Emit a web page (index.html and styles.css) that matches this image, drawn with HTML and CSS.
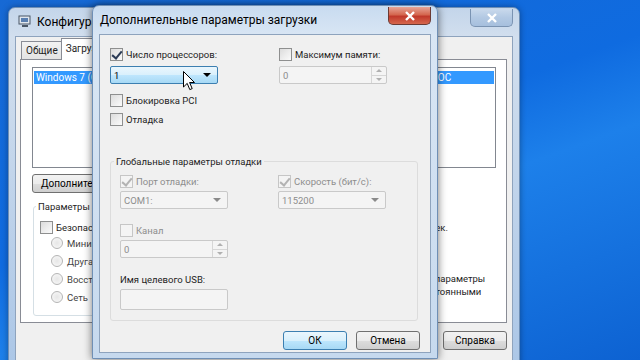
FILE: index.html
```html
<!DOCTYPE html>
<html lang="ru">
<head>
  <meta charset="UTF-8" />
  <meta name="viewport" content="width=device-width, initial-scale=1.0"/>
  <title>Дополнительные параметры загрузки</title>
  <link rel="stylesheet" href="styles.css">
</head>
<body>
  <div class="desktop">

    <!-- окно на заднем плане -->
    <div class="window main-win">
      <div class="titlebar">
        <svg class="app-icon" width="14" height="14" viewBox="0 0 14 14">
          <rect x="1" y="1" width="11" height="8" fill="#dfe6ee" stroke="#4a5766"/>
          <rect x="3" y="3" width="7" height="4" fill="#5a7fb0"/>
          <rect x="4" y="10" width="6" height="2" fill="#4a5766"/>
        </svg>
        <span class="title">Конфигурация системы</span>
        <div class="close-btn inactive">
          <svg width="12" height="10" viewBox="0 0 12 10"><path d="M2 1 L10 9 M10 1 L2 9" stroke="#fff" stroke-width="2.4"/></svg>
        </div>
      </div>
      <div class="client">
        <div class="tabs">
          <div class="tab">Общие</div>
          <div class="tab active">Загрузка</div>
          <div class="tab">Службы</div>
          <div class="tab">Автозагрузка</div>
          <div class="tab">Сервис</div>
        </div>
        <div class="tab-page">
          <div class="listbox">
            <div class="list-row selected">Windows 7 (C:\Windows) : Текущая операционная система; Выбранная по умолчанию ОС</div>
          </div>
          <div class="tab-buttons">
            <button class="btn">Дополнительные параметры...</button>
          </div>
          <div class="boot-area">
            <fieldset class="boot-group">
              <legend>Параметры загрузки</legend>
              <label class="check-row"><span class="check"></span>Безопасный режим</label>
              <label class="radio-row"><span class="radio"></span>Минимальная</label>
              <label class="radio-row"><span class="radio"></span>Другая оболочка</label>
              <label class="radio-row"><span class="radio"></span>Восстановление AD</label>
              <label class="radio-row"><span class="radio"></span>Сеть</label>
            </fieldset>
            <div class="boot-side">
              <div class="timeout">Таймаут: 30 сек.</div>
              <label class="persist"><span class="check"></span><span>Сделать эти параметры<br>загрузки постоянными</span></label>
            </div>
          </div>
        </div>
        <div class="win-buttons">
          <button class="btn">Справка</button>
        </div>
      </div>
    </div>

    <!-- активный диалог -->
    <div class="window dialog">
      <div class="titlebar">
        <span class="title">Дополнительные параметры загрузки</span>
        <div class="close-btn">
          <svg width="12" height="10" viewBox="0 0 12 10"><path d="M2 1 L10 9 M10 1 L2 9" stroke="#fff" stroke-width="2.4"/></svg>
        </div>
      </div>
      <div class="client">
        <div class="top-grid">
          <div class="field">
            <label class="check-row"><span class="check on"></span>Число процессоров:</label>
            <div class="combo hover"><span>1</span><span class="arrow"></span></div>
          </div>
          <div class="field">
            <label class="check-row"><span class="check"></span>Максимум памяти:</label>
            <div class="spin disabled"><span>0</span><span class="spin-btns"><i class="up"></i><i class="down"></i></span></div>
          </div>
          <div class="field plain">
            <label class="check-row"><span class="check"></span>Блокировка PCI</label>
            <label class="check-row"><span class="check"></span>Отладка</label>
          </div>
        </div>

        <fieldset class="debug-group">
          <legend>Глобальные параметры отладки</legend>
          <div class="group-grid">
            <div class="field">
              <label class="check-row disabled"><span class="check on"></span>Порт отладки:</label>
              <div class="combo disabled"><span>COM1:</span><span class="arrow"></span></div>
            </div>
            <div class="field">
              <label class="check-row disabled"><span class="check on"></span>Скорость (бит/с):</label>
              <div class="combo disabled"><span>115200</span><span class="arrow"></span></div>
            </div>
            <div class="field">
              <label class="check-row disabled"><span class="check"></span>Канал</label>
              <div class="spin disabled"><span>0</span><span class="spin-btns"><i class="up"></i><i class="down"></i></span></div>
            </div>
            <div></div>
            <div class="field">
              <div class="field-label">Имя целевого USB:</div>
              <div class="textbox disabled"></div>
            </div>
          </div>
        </fieldset>

        <div class="dialog-buttons">
          <button class="btn default">ОК</button>
          <button class="btn">Отмена</button>
        </div>
      </div>
    </div>

    <svg class="cursor" width="13" height="20" viewBox="0 0 13 20">
      <path d="M0.5 0.5 L0.5 16 L4.2 12.4 L6.8 18.6 L9.2 17.6 L6.6 11.5 L11.5 11.5 Z" fill="#fff" stroke="#000" stroke-width="1"/>
    </svg>
  </div>
</body>
</html>
```

FILE: styles.css
```css
body {
  margin: 0;
  font-family: Roboto, "Noto Sans", sans-serif;
  font-size: 9.5px;
  color: #1e1e1e;
}
.desktop {
  position: relative;
  width: 640px;
  height: 360px;
  overflow: hidden;
  background: linear-gradient(160deg, #1769d4 0%, #0f6be0 45%, #1d80ea 60%, #0d62d2 100%);
}

/* окна */
.window {
  position: absolute;
  border-radius: 7px 7px 0 0;
  background: linear-gradient(180deg, #c8dbf0 0px, #d9e6f4 30px, #c6d9ee 100%);
  border: 1px solid #6f8fb5;
  box-sizing: border-box;
}
.main-win {
  left: 8px;
  top: 7px;
  width: 512px;
  height: 380px;
  z-index: 1;
  background: linear-gradient(180deg, #c3d5ea 0px, #d2dfee 30px, #a9c5e6 100%);
  box-shadow: 0 0 6px rgba(0,0,0,0.35);
}
.dialog {
  left: 92px;
  top: 5px;
  width: 346px;
  height: 354px;
  z-index: 2;
  box-shadow: 0 0 9px rgba(0,0,0,0.55);
}
.titlebar {
  height: 28px;
  display: flex;
  align-items: center;
  padding-left: 7px;
  position: relative;
}
.main-win .titlebar {
  padding-left: 9px;
}
.title {
  font-size: 12px;
  color: #000;
}
.app-icon {
  margin-right: 5px;
}
.close-btn {
  position: absolute;
  right: 6px;
  top: 1px;
  width: 43px;
  height: 18px;
  box-sizing: border-box;
  border: 1px solid #6b3a33;
  border-top: none;
  border-radius: 0 0 5px 5px;
  background: linear-gradient(180deg, #e7a597 0%, #d4674f 45%, #c0392b 55%, #d5674d 100%);
  display: flex;
  align-items: center;
  justify-content: center;
}
.close-btn.inactive {
  border-color: #7a93b2;
  background: linear-gradient(180deg, #c9d9ec 0%, #b3c9e3 50%, #a6bfdd 100%);
}
.client {
  background: #f0f0f0;
  margin: 0 6px;
  border: 1px solid #8ea3bd;
  box-sizing: border-box;
  position: relative;
}
.main-win .client {
  height: 345px;
  padding: 2px 5px 0 4px;
}
.dialog .client {
  height: 319px;
}

/* вкладки */
.tabs {
  display: flex;
  height: 20px;
  align-items: flex-end;
  padding-left: 1px;
}
.tab {
  height: 17px;
  padding: 0 4px;
  line-height: 17px;
  border: 1px solid #898c95;
  border-bottom: none;
  background: linear-gradient(#f2f2f2, #e3e3e3);
  margin-right: -1px;
  font-size: 10px;
}
.tab.active {
  line-height: 19px;
  background: #fff;
  position: relative;
  z-index: 1;
  margin: 0 1px -1px -1px;
  height: 21px;
}
.tab-page {
  background: #fff;
  border: 1px solid #898c95;
  height: 264px;
  padding: 7px 10px 0 11px;
  box-sizing: border-box;
}
.listbox {
  border: 1px solid #828790;
  height: 101px;
  padding: 3px 1px;
  box-sizing: border-box;
}
.list-row {
  height: 13px;
  line-height: 13px;
  padding-left: 2px;
  font-size: 10px;
  white-space: nowrap;
  overflow: hidden;
}
.list-row.selected {
  background: #3399ff;
  color: #fff;
}
.tab-buttons {
  margin-top: 6px;
}
.boot-area {
  display: flex;
  margin-top: 8px;
}
.boot-group {
  margin: 0 0 0 1px;
  width: 300px;
  height: 115px;
  border: 1px solid #d5dfe5;
  border-radius: 3px;
  padding: 9px 6px 0;
  box-sizing: border-box;
}
.boot-group legend {
  padding: 0 2px;
  margin-left: -4px;
}
.radio-row {
  display: flex;
  align-items: center;
  height: 18px;
  padding-left: 11px;
  color: #444;
}
.radio-row:first-of-type {
  margin-top: 9px;
}
.radio {
  width: 10px;
  height: 10px;
  border-radius: 50%;
  border: 1px solid #b5b5b5;
  background: radial-gradient(#e6e6e6, #fafafa);
  margin-right: 4px;
}
.boot-side {
  width: 115px;
  padding-top: 21px;
}
.timeout {
  text-align: right;
}
.persist {
  display: flex;
  align-items: flex-start;
  margin: 39px 0 0 29px;
  line-height: 13px;
  white-space: nowrap;
}
.persist .check {
  margin-top: 1px;
}
.win-buttons {
  display: flex;
  justify-content: flex-end;
  padding: 8px 0 0;
}

/* кнопки */
.btn {
  font-family: inherit;
  font-size: 10px;
  height: 19px;
  min-width: 64px;
  padding: 0 8px;
  border: 1px solid #707070;
  border-radius: 3px;
  background: linear-gradient(180deg, #f2f2f2 0%, #ebebeb 50%, #dddddd 51%, #cfcfcf 100%);
  color: #000;
}
.btn.default {
  border-color: #3c7fb1;
  background: linear-gradient(180deg, #eaf6fd 0%, #d9f0fc 50%, #bee6fd 51%, #a7d9f5 100%);
}

/* флажки и поля */
.check-row {
  display: flex;
  align-items: center;
  height: 13px;
}
.check {
  flex: none;
  width: 11px;
  height: 11px;
  border: 1px solid #8e8f8f;
  background: linear-gradient(135deg, #dcdcdc, #fbfbfb);
  margin-right: 3px;
  position: relative;
}
.check.on::after {
  content: "";
  position: absolute;
  left: 3px;
  top: 0px;
  width: 4px;
  height: 8px;
  border: solid #2a3a55;
  border-width: 0 2px 2px 0;
  transform: rotate(40deg);
}
.check-row.disabled {
  color: #8d8d8d;
}
.check-row.disabled .check {
  border-color: #c6c6c6;
  background: #f4f4f4;
}
.check-row.disabled .check.on::after {
  border-color: #b3b3b3;
}
.field {
  display: flex;
  flex-direction: column;
  gap: 5px;
}
.combo, .spin, .textbox {
  width: 108px;
  height: 18px;
  box-sizing: border-box;
  border: 1px solid #adb2b5;
  border-radius: 2px;
  display: flex;
  align-items: center;
  justify-content: space-between;
  padding-left: 3px;
}
.combo.hover {
  border-color: #3c7fb1;
  background: linear-gradient(180deg, #eaf6fd 0%, #d9f0fc 50%, #bee6fd 51%, #a7d9f5 100%);
  color: #000;
}
.combo.disabled, .spin.disabled, .textbox.disabled {
  background: #f4f4f4;
  color: #8d8d8d;
  border-color: #c9c9c9;
}
.arrow {
  width: 0;
  height: 0;
  border: 4px solid transparent;
  border-top: 4px solid #000;
  border-bottom: none;
  margin-right: 6px;
}
.combo.disabled .arrow {
  border-top-color: #8a8a8a;
}
.spin {
  padding-right: 0;
}
.spin-btns {
  display: flex;
  flex-direction: column;
  height: 100%;
  width: 14px;
  border-left: 1px solid #d6d6d6;
}
.spin-btns i {
  flex: 1;
  display: flex;
  align-items: center;
  justify-content: center;
}
.spin-btns i + i {
  border-top: 1px solid #d6d6d6;
}
.spin-btns i::before {
  content: "";
  border: 3px solid transparent;
}
.spin-btns .up::before {
  border-bottom: 3px solid #b0b0b0;
  border-top: none;
}
.spin-btns .down::before {
  border-top: 3px solid #b0b0b0;
  border-bottom: none;
}
.textbox {
  height: 21px;
}

/* содержимое диалога */
.top-grid {
  display: grid;
  grid-template-columns: 169px 120px;
  row-gap: 10px;
  padding: 13px 0 0 10px;
}
.top-grid .plain {
  gap: 6px;
}
.debug-group {
  margin: 30px 0 0 10px;
  width: 308px;
  height: 165px;
  box-sizing: border-box;
  border: 1px solid #dcdcdc;
  border-radius: 3px;
  padding: 8px 0 0 9px;
}
.debug-group legend {
  padding: 0 2px;
  margin-left: -6px;
  color: #1e1e1e;
}
.debug-group .field {
  gap: 3px;
}
.group-grid {
  display: grid;
  grid-template-columns: 158px 120px;
  row-gap: 15px;
}
.field-label {
  height: 13px;
  line-height: 13px;
}
.dialog-buttons {
  display: flex;
  justify-content: flex-end;
  gap: 9px;
  padding: 10px 10px 0 0;
}

.cursor {
  position: absolute;
  z-index: 3;
  left: 183px;
  top: 71px;
}
```
